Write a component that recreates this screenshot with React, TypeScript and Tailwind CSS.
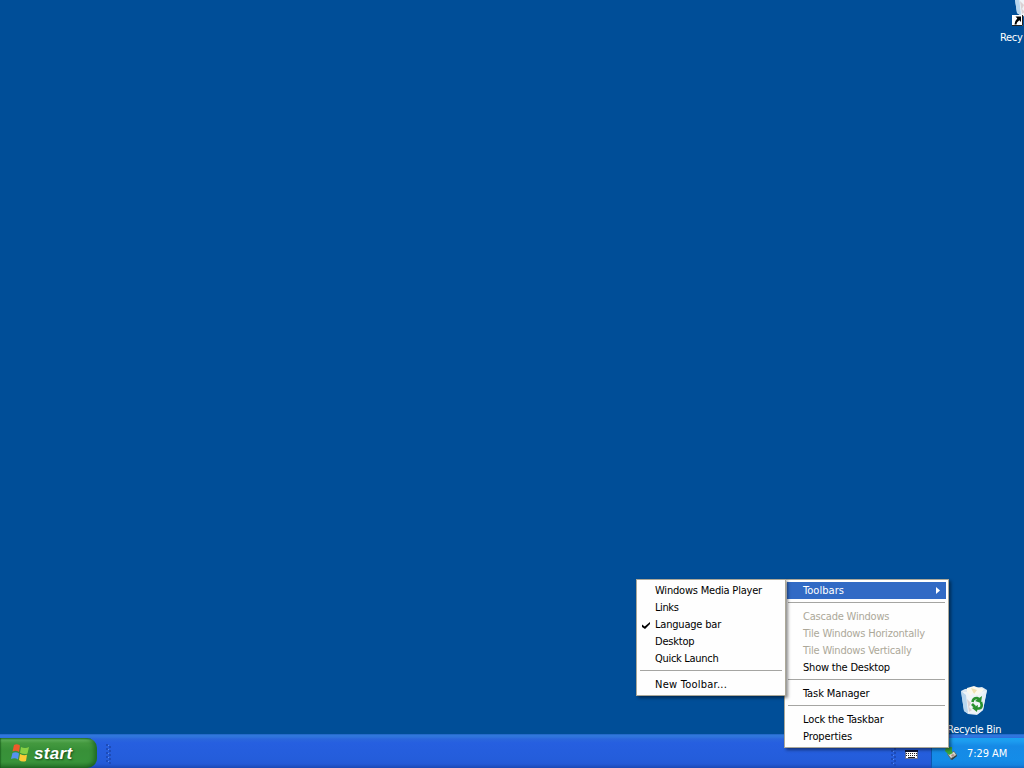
import React from 'react';

interface MenuEntry {
  label?: string;
  tracking?: string;
  disabled?: boolean;
  active?: boolean;
  checked?: boolean;
}

const toolbarItems: MenuEntry[] = [
  { label: 'Windows Media Player' },
  { label: 'Links', tracking: 'tracking-[-0.4px]' },
  { label: 'Language bar' , checked: true },
  { label: 'Desktop' },
  { label: 'Quick Launch', tracking: 'tracking-[-0.3px]' },
  {},
  { label: 'New Toolbar...', tracking: 'tracking-[0.25px]' },
];

const taskbarItems: MenuEntry[] = [
  { label: 'Toolbars', active: true, tracking: 'tracking-[0.05px]' },
  {},
  { label: 'Cascade Windows', disabled: true },
  { label: 'Tile Windows Horizontally', disabled: true },
  { label: 'Tile Windows Vertically', disabled: true },
  { label: 'Show the Desktop' },
  {},
  { label: 'Task Manager', tracking: 'tracking-[-0.1px]' },
  {},
  { label: 'Lock the Taskbar', tracking: 'tracking-[-0.12px]' },
  { label: 'Properties', tracking: 'tracking-[-0.1px]' },
];

const MenuItem: React.FC<{ item: MenuEntry }> = ({ item }) => {
  if (!item.label) {
    return (
      <div className="h-[9px] px-px pt-[3px]">
        <div className="h-px bg-[#a5a5a2]" />
      </div>
    );
  }
  const color = item.active ? 'bg-[#316ac5] text-white' : item.disabled ? 'text-[#aca899]' : 'text-black';
  return (
    <div className={`flex h-[17px] items-center ${color}`}>
      <span className="flex w-4 shrink-0 pl-[3px]">
        {item.checked && (
          <svg width="8" height="7" viewBox="0 0 8 7" className="mt-[2px]">
            <path d="M0 2.5 L2.7 4.5 L8 0 V2 L3 7 L0 5 Z" fill="#000" />
          </svg>
        )}
      </span>
      <span className={`flex-1 whitespace-nowrap ${item.tracking ?? ''}`}>{item.label}</span>
      {item.active && (
        <svg width="4" height="7" viewBox="0 0 4 7" className="mr-[6px]">
          <path d="M0 0 L4 3.5 L0 7 Z" fill="#fff" />
        </svg>
      )}
    </div>
  );
};

const ContextMenu: React.FC<{ items: MenuEntry[]; className: string }> = ({ items, className }) => (
  <div className={`absolute border border-[#aca899] bg-[#fefefe] p-[2px] shadow-[2px_2px_3px_rgba(0,0,0,0.45)] ${className}`}>
    {items.map((item, index) => (
      <MenuItem key={index} item={item} />
    ))}
  </div>
);

const RecycleBin: React.FC<{ className?: string }> = ({ className = '' }) => (
  <svg width="28" height="30" viewBox="0 0 28 30" className={className}>
    <path d="M1 5 L5 3 L22 1 L27 4 L23 24 L17 29 L8 28 L4 25 Z" fill="#dce8f2" />
    <path d="M7 2 L14 0 L19 2 L24 3 L20 9 L7 10 Z" fill="#faf8ee" />
    <path d="M11 2 L17 4 L14 8 Z" fill="#eee0b0" />
    <path d="M3 6 L8 6 L10 10 L13 7 L17 10 L21 6 L26 5 L22 24 L17 28 L8 27 Z" fill="#eff4f8" />
    <path d="M1 5 L6 9 L8 27 L4 25 Z" fill="#b7d5ee" />
    <path d="M27 4 L22 9 L18 28 L23 24 Z" fill="#e4eef5" />
    <path d="M7 13 L11 17 L9 21 L12 24 L9 26 Z" fill="#cbb9bb" opacity="0.6" />
    <g fill="none" stroke="#28912f" strokeWidth="2.6">
      <path d="M12.5 16 Q13 12 17 12 L19 13" />
      <path d="M21 16 Q23 22 19 22.5 H17" />
      <path d="M15 21 L12 18" />
    </g>
    <path d="M22 10 L21 17 L15 15 Z M18 19 L17 26 L12 22 Z" fill="#28912f" />
  </svg>
);

const WindowsFlag: React.FC = () => (
  <svg width="19" height="18" viewBox="0 0 19 18">
    <path d="M3 1 Q6 -0.5 9 1.5 L8 8 Q5 6 1.5 7.5 Z" fill="#ee5a2b" />
    <path d="M10 3 Q14 5 18 3 L16.5 9.5 Q13 11 9 8.7 Z" fill="#86cf45" />
    <path d="M1.5 9 Q5 7.5 8 9.5 L7 15.5 Q4 13.5 0 15 Z" fill="#5592f0" />
    <path d="M9 10 Q13 12 16 10.8 L15 17 Q11 18.5 8 16 Z" fill="#fbca35" />
  </svg>
);

const Gripper: React.FC<{ className?: string }> = ({ className = '' }) => (
  <svg width="6" height="20" viewBox="0 0 6 20" className={className}>
    {[0, 4, 8, 12, 16].map((y) => (
      <g key={y}>
        <rect x="0" y={y} width="2" height="2" fill="#1d4bb8" />
        <rect x="3" y={y + 2} width="2" height="2" fill="#1d4bb8" />
        <rect x="2" y={y + 1} width="1" height="1" fill="#5b8df0" />
      </g>
    ))}
  </svg>
);

const KeyboardIcon: React.FC = () => (
  <svg width="13" height="9" viewBox="0 0 13 9">
    <rect width="13" height="9" fill="#fff" />
    <rect width="13" height="2" fill="#0c1433" />
    <path d="M1 3.5 H12 M1 5.5 H12" stroke="#222" strokeWidth="1" strokeDasharray="1 1" />
    <path d="M3 7.5 H10" stroke="#222" strokeWidth="1" />
    <path d="M0 8.5 H13 M0.5 2 V9 M12.5 2 V9" stroke="#26346a" strokeWidth="1" opacity="0.7" />
  </svg>
);

const SafelyRemoveIcon: React.FC = () => (
  <svg width="14" height="16" viewBox="0 0 14 16">
    <path d="M3 9 L10 6 L13 10 L7 15 Z" fill="#626c67" />
    <path d="M4 9 L10 7 L12 10 L7 13 Z" fill="#dcded4" />
    <path d="M7 10 L9 9 L11 10 L8 12 Z" fill="#b48c84" />
    <path d="M2 2 H8 V7 L9 8 L5 10 L1 6 Z" fill="#3aa53a" />
    <path d="M7 14 L13 10 V11 L8 15 Z" fill="#303b3c" />
  </svg>
);

const Taskbar: React.FC = () => (
  <div className="h-[34px] bg-[linear-gradient(180deg,#1a5cba_0px,#2f78dd_1px,#2f74de_3px,#2a66dd_5px,#265fe0_9px,#245ddb_25px,#2359d6_30px,#1b48b4_34px)] pt-1">
    <div className="flex h-[30px]">
      <div className="flex w-[97px] items-center rounded-r-[10px] bg-[linear-gradient(180deg,#2c7a2b_0px,#5cae59_2px,#44993f_5px,#389038_12px,#38933a_24px,#2b7a2e_30px)] pl-[11px] shadow-[inset_-3px_-1px_4px_rgba(15,80,20,0.6),inset_1px_0_1px_rgba(15,80,20,0.5)]">
        <WindowsFlag />
        <span className="ml-[4px] font-['Liberation_Sans',sans-serif] text-[17px] leading-none font-bold tracking-[0.3px] text-white italic [text-shadow:1px_1px_2px_#174a18]">
          start
        </span>
      </div>
      <Gripper className="mt-[6px] ml-[9px]" />
      <div className="flex-1" />
      <Gripper className="mt-[8px]" />
      <div className="mt-[12px] ml-[8px]">
        <KeyboardIcon />
      </div>
      <div className="ml-[13px] flex w-[93px] items-center border-l border-[#0c57b0] bg-[linear-gradient(180deg,#19a2ef_0px,#1d9df0_3px,#168ae6_8px,#148ce8_22px,#1583df_27px,#1268c4_30px)] pl-[12px] text-white">
        <SafelyRemoveIcon />
        <span className="ml-[9px] tracking-[-0.05px] whitespace-nowrap">7:29 AM</span>
      </div>
    </div>
  </div>
);

const App: React.FC = () => {
  return (
    <div className="relative flex h-[768px] w-[1024px] flex-col overflow-hidden bg-[#004e98] font-['DejaVu_Sans_Condensed','DejaVu_Sans',sans-serif] text-[11px] leading-[13px] tracking-[-0.2px] [font-stretch:condensed]">
      <div className="flex-1" />
      <Taskbar />

      {/* desktop shortcuts */}
      <div className="absolute top-[-12px] left-[1000px] w-[60px] text-white">
        <RecycleBin className="ml-[13px]" />
        <svg width="11" height="11" viewBox="0 0 11 11" className="absolute top-[27px] left-[12px]">
          <rect width="11" height="11" fill="#fff" />
          <path d="M0 10.5 H10.5 V0" fill="none" stroke="#222" strokeWidth="1" />
          <path d="M3.5 1.5 H9 V7 L7.3 5.3 Q4.5 7 4.5 9.5 H2.5 Q2.5 6 5.3 3.5 Z" fill="#000" />
        </svg>
        <div className="mt-[13px] tracking-[-0.3px] whitespace-nowrap">Recy</div>
      </div>
      <div className="absolute top-[686px] left-[947px] w-[60px] text-white">
        <RecycleBin className="ml-[13px]" />
        <div className="mt-[7px] tracking-[-0.25px] whitespace-nowrap">Recycle Bin</div>
      </div>

      <ContextMenu items={taskbarItems} className="top-[579px] left-[784px] h-[169px] w-[165px]" />
      <ContextMenu items={toolbarItems} className="top-[579px] left-[636px] h-[117px] w-[150px]" />
    </div>
  );
};

export default App;
